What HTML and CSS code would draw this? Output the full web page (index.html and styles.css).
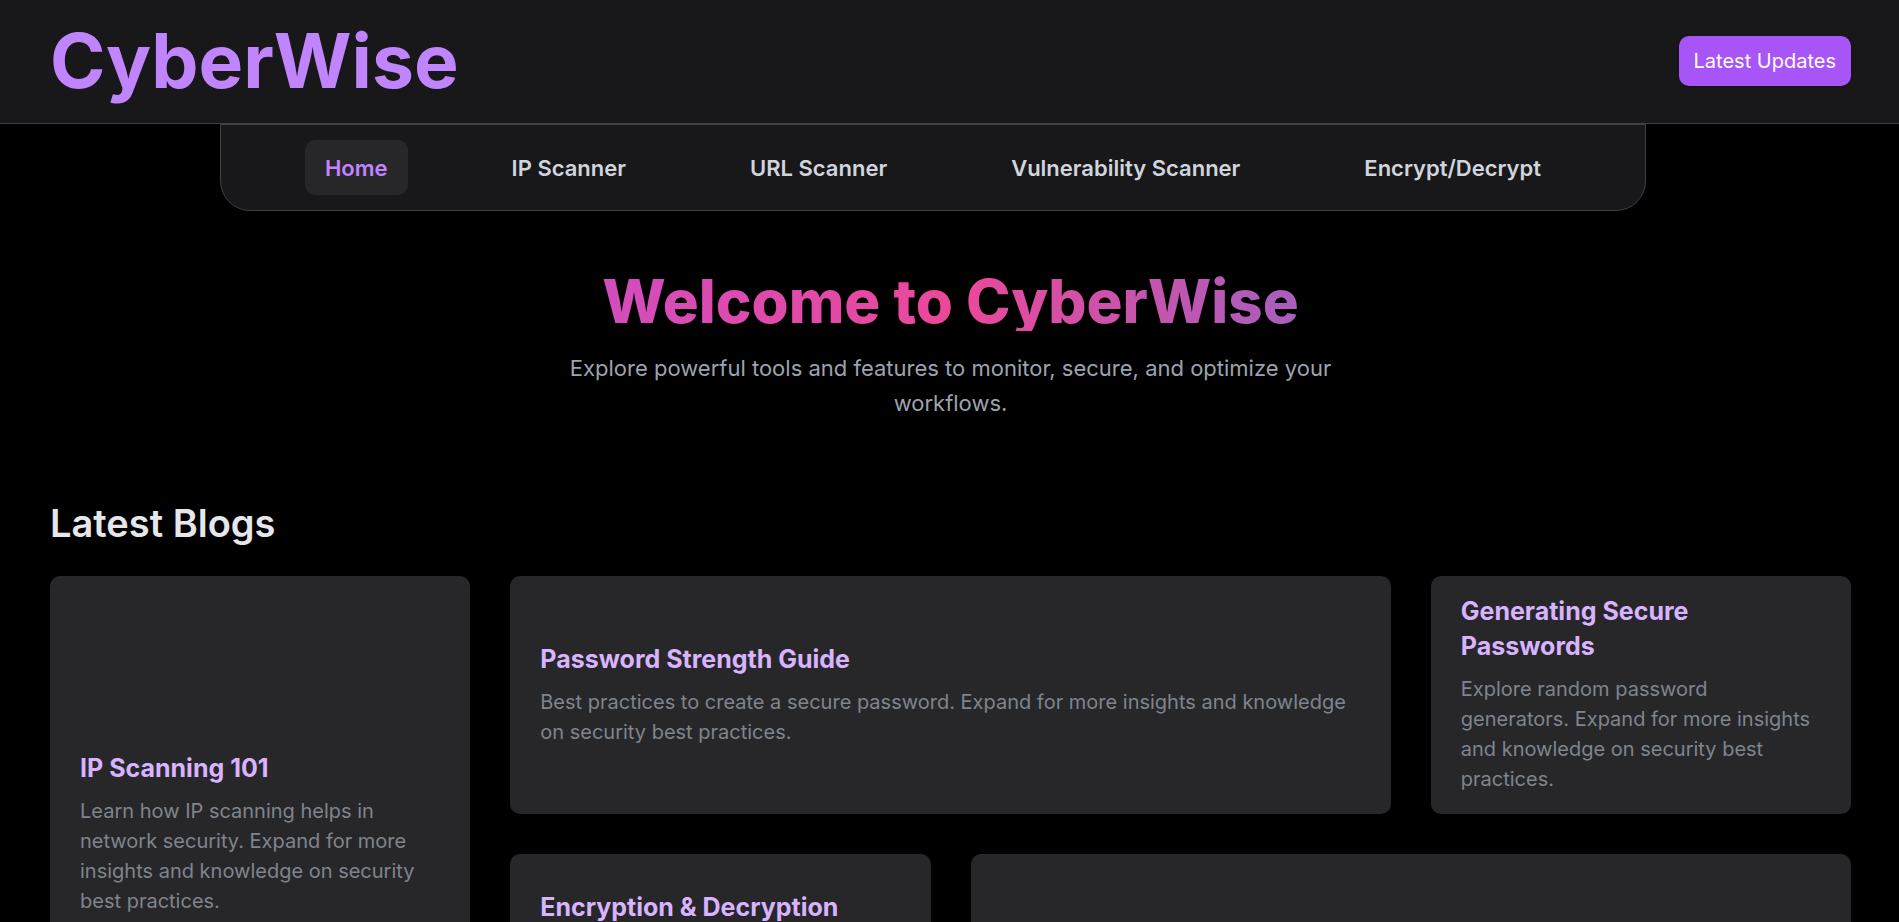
FILE: index.html
```html
<!DOCTYPE html>
<html lang="en">
<head>
<meta charset="utf-8">
<meta name="viewport" content="width=device-width, initial-scale=1">
<title>CyberWise</title>
<link rel="stylesheet" href="styles.css">
</head>
<body>
<header class="header">
  <div class="logo">CyberWise</div>
  <button class="updates" type="button">Latest Updates</button>
</header>
<nav class="nav" aria-label="Main">
  <a class="nav-link active" href="#home" aria-current="page">Home</a>
  <a class="nav-link" href="#ip">IP Scanner</a>
  <a class="nav-link" href="#url">URL Scanner</a>
  <a class="nav-link" href="#vulnerability">Vulnerability Scanner</a>
  <a class="nav-link" href="#encrypt">Encrypt/Decrypt</a>
</nav>
<main class="main">
  <section class="hero">
    <h1 class="hero-title">Welcome to CyberWise</h1>
    <p class="hero-text">Explore powerful tools and features to monitor, secure, and optimize your workflows.</p>
  </section>
  <section class="blogs">
    <h2 class="blogs-title">Latest Blogs</h2>
    <div class="grid">
      <article class="card tall">
        <h3 class="card-title">IP Scanning 101</h3>
        <p class="card-text">Learn how IP scanning helps in network security. Expand for more insights and knowledge on security best practices.</p>
      </article>
      <article class="card wide">
        <h3 class="card-title">Password Strength Guide</h3>
        <p class="card-text">Best practices to create a secure password. Expand for more insights and knowledge on security best practices.</p>
      </article>
      <article class="card">
        <h3 class="card-title">Generating Secure Passwords</h3>
        <p class="card-text">Explore random password generators. Expand for more insights and knowledge on security best practices.</p>
      </article>
      <article class="card">
        <h3 class="card-title">Encryption &amp; Decryption</h3>
        <p class="card-text">Learn how to encrypt and decrypt data. Expand for more insights and knowledge on security best practices.</p>
      </article>
      <article class="card wide">
        <h3 class="card-title">Vulnerability Scanning</h3>
        <p class="card-text">Find weak points early.</p>
      </article>
    </div>
  </section>
</main>
</body>
</html>
```
FILE: styles.css
```css
*,
*::before,
*::after {
  box-sizing: border-box;
}

body {
  margin: 0;
  background: #000;
  color: #fff;
  font-family: Inter, "Liberation Sans", sans-serif;
  font-size: 20px;
  line-height: 30px;
}

h1, h2, h3, p {
  margin: 0;
}

.header {
  display: flex;
  align-items: center;
  justify-content: space-between;
  padding: 23px 48px 25px 50px;
  background: #18181b;
  border-bottom: 1px solid #3f3f46;
}

.logo {
  color: #c084fc;
  font-size: 75px;
  font-weight: 700;
  line-height: 75px;
}

.updates {
  padding: 10px 15px;
  border: 0;
  border-radius: 10px;
  background: #a855f7;
  color: #fff;
  font: inherit;
  box-shadow: 0 1px 3px rgba(0, 0, 0, 0.3);
}

.nav {
  display: flex;
  justify-content: space-evenly;
  margin: 0 253px 0 220px;
  padding: 15px 0;
  background: #18181b;
  border: 1px solid #3f3f46;
  border-radius: 0 0 30px 30px;
}

.nav-link {
  padding: 13px 20px 12px;
  border-radius: 10px;
  color: #d1d5db;
  font-size: 22px;
  font-weight: 600;
  text-decoration: none;
  white-space: nowrap;
}

.active {
  background: #27272a;
  color: #c084fc;
}

.main {
  padding: 60px 48px 60px 50px;
}

.hero {
  text-align: center;
}

.hero-title {
  background: linear-gradient(to right, #a855f7, #ec4899, #3b82f6);
  -webkit-background-clip: text;
  background-clip: text;
  color: transparent;
  font-size: 60px;
  font-weight: 800;
  line-height: 60px;
}

.hero-text {
  max-width: 840px;
  margin: 20px auto 0;
  color: #9ca3af;
  font-size: 22px;
  line-height: 35px;
}

.blogs {
  margin-top: 80px;
}

.blogs-title {
  margin-bottom: 30px;
  color: #e5e7eb;
  font-size: 38px;
  font-weight: 600;
  line-height: 45px;
}

.grid {
  display: grid;
  grid-template-columns: repeat(4, 1fr);
  grid-auto-rows: minmax(238px, auto);
  gap: 40px;
}

.card {
  display: flex;
  flex-direction: column;
  justify-content: center;
  padding: 14px 30px 16px;
  border-radius: 10px;
  background: #27272a;
}

.tall {
  grid-row: span 2;
}

.wide {
  grid-column: span 2;
}

.card-title {
  margin-bottom: 10px;
  color: #d8b4fe;
  font-size: 25px;
  font-weight: 700;
  line-height: 35px;
}

.card-text {
  color: #7f848d;
}
```
